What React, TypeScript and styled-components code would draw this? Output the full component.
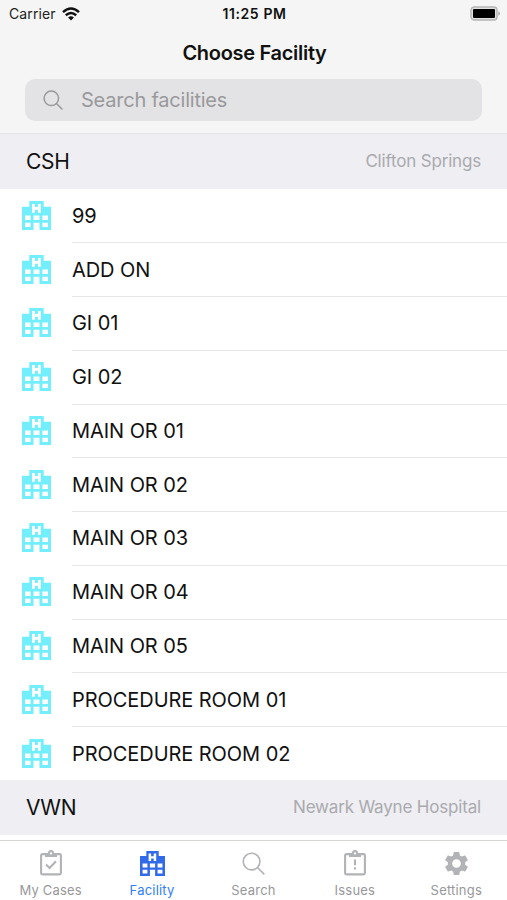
import React from "react";
import styled, { createGlobalStyle } from "styled-components";
import { MdSettings } from "react-icons/md";

const GlobalStyle = createGlobalStyle`
  * { box-sizing: border-box; }
  body { margin: 0; background: #fff; }
`;

const Screen = styled.div`
  width: 507px;
  height: 900px;
  display: flex;
  flex-direction: column;
  overflow: hidden;
  background: #fff;
  color: #111;
  font-family: Inter, "Liberation Sans", sans-serif;
  white-space: nowrap;
`;

const Header = styled.header`
  flex: none;
  height: 133.5px;
  background: #f5f5f5;
  border-bottom: 1px solid #e3e3e5;
`;

const StatusBar = styled.div`
  display: grid;
  grid-template-columns: 1fr auto 1fr;
  align-items: center;
  height: 27px;
  padding: 0 7px 0 9px;
  font-size: 14px;
`;

const Carrier = styled.div`
  display: flex;
  align-items: center;
  gap: 6px;
  color: #222;
  letter-spacing: 0.12px;
`;

const Clock = styled.div`
  font-weight: 600;
  letter-spacing: 0.6px;
`;

const BatterySlot = styled.div`
  display: flex;
  justify-content: flex-end;
`;

const Title = styled.h1`
  margin: 0;
  height: 52px;
  line-height: 52px;
  padding-left: 2px;
  text-align: center;
  font-size: 20px;
  font-weight: 600;
  letter-spacing: -0.3px;
`;

const SearchField = styled.div`
  display: flex;
  align-items: center;
  gap: 18px;
  height: 41.5px;
  margin: 0 25px;
  padding-left: 18px;
  border-radius: 10px;
  background: #e3e3e5;
  color: #99999c;
  font-size: 20px;
  letter-spacing: -0.22px;
`;

const List = styled.main`
  flex: 1;
  min-height: 0;
  overflow: hidden;
`;

const SectionHeader = styled.div`
  display: flex;
  align-items: center;
  justify-content: space-between;
  height: 55px;
  padding: 0 26px;
  background: #eeeef3;
`;

const SectionCode = styled.h2`
  margin: 0;
  font-size: 21px;
  font-weight: 400;
  letter-spacing: -0.25px;
`;

const SectionName = styled.span`
  color: #aaaaae;
  font-size: 17px;
  letter-spacing: -0.18px;
`;

const Row = styled.div`
  display: flex;
  height: 53.77px;
  padding-left: 22px;
  align-items: center;
`;

const RowLabel = styled.div<{ $first: boolean }>`
  display: flex;
  align-items: center;
  flex: 1;
  height: 100%;
  margin-left: 21px;
  border-top: 1px solid ${(p) => (p.$first ? "transparent" : "#e6e6e8")};
  font-size: 20px;
  letter-spacing: -0.06px;
`;

const TabBar = styled.nav`
  flex: none;
  display: grid;
  grid-template-columns: repeat(5, 1fr);
  height: 60px;
  border-top: 1px solid #d5d5d2;
  background: #fff;
`;

const Tab = styled.div<{ $active: boolean }>`
  display: flex;
  flex-direction: column;
  align-items: center;
  color: ${(p) => (p.$active ? "#2f80f5" : "#98989b")};
  font-size: 13px;
  letter-spacing: 0.2px;
`;

const TabIcon = styled.div<{ $active: boolean }>`
  display: flex;
  align-items: center;
  justify-content: center;
  height: 44px;
  margin-bottom: -3px;
  color: ${(p) => (p.$active ? "#326bea" : "#b1b3b6")};
`;

const Hospital = ({ size }: { size: number }) => (
  <svg width={size} height={size} viewBox="0 0 29 29" fill="currentColor" fillRule="evenodd">
    <path d="M7.3 0H21.7V5.7H29V29H17.5V21.7H11.5V29H0V5.7H7.3ZM10 3V11.7H12.9V8.7H15.9V11.7H18.8V3H15.9V6H12.9V3ZM3 14.6V19H8.6V14.6ZM11.5 14.6V19H17.5V14.6ZM20.4 14.6V19H26V14.6ZM3 21.8V26.1H8.6V21.8ZM20.4 21.8V26.1H26V21.8Z" />
  </svg>
);

const Magnifier = ({ size, stroke }: { size: number; stroke: number }) => (
  <svg width={size} height={size} viewBox="0 0 24 24" fill="none" stroke="currentColor" strokeWidth={stroke}>
    <circle cx="10" cy="10" r="8.7" />
    <path d="M16.2 16.2L23.3 23.3" />
  </svg>
);

const Clipboard = ({ mark }: { mark: string }) => (
  <svg width="22" height="26" viewBox="0 0 22 26" fill="none" stroke="currentColor" strokeWidth="2.1">
    <rect x="1.1" y="4.1" width="19.8" height="20.3" rx="1.4" />
    <path d="M5 3H8A3 3 0 0 1 14 3H17V7H5Z" fill="currentColor" stroke="none" />
    <circle cx="11" cy="3.4" r="1.1" fill="#fff" stroke="none" />
    <path d={mark} />
  </svg>
);

const Wifi = () => (
  <svg width="18" height="14" viewBox="0 0 18 14" fill="none" stroke="#111" strokeWidth="2.5">
    <path d="M1 5.1Q9 -2.2 17 5.1M3.8 8.3Q9 3.7 14.2 8.3" />
    <path d="M6.1 10.5Q9 8 11.9 10.5L9 13.5Z" fill="#111" stroke="none" />
  </svg>
);

const Battery = () => (
  <svg width="30" height="15" viewBox="0 0 30 15">
    <rect x="1" y="1" width="26" height="13" rx="3.2" fill="#e2e2e2" stroke="#b4b4b4" strokeWidth="1.4" />
    <rect x="3" y="3" width="22" height="9" rx="1" fill="#000" />
    <path d="M28.3 5.2Q30 6 30 7.5T28.3 9.8Z" fill="#aaa" />
  </svg>
);

const rooms = [
  "99",
  "ADD ON",
  "GI 01",
  "GI 02",
  "MAIN OR 01",
  "MAIN OR 02",
  "MAIN OR 03",
  "MAIN OR 04",
  "MAIN OR 05",
  "PROCEDURE ROOM 01",
  "PROCEDURE ROOM 02",
];

const tabs = [
  { label: "My Cases", icon: <Clipboard mark="M6 14.5L9.6 18L16 11.2" /> },
  { label: "Facility", icon: <Hospital size={25} />, active: true },
  { label: "Search", icon: <Magnifier size={23} stroke={1.7} /> },
  { label: "Issues", icon: <Clipboard mark="M11 9.5V15.2M11 17.3V19.5" /> },
  { label: "Settings", icon: <MdSettings size={29} /> },
];

const RoomIcon = styled.div`
  display: flex;
  color: #73eefd;
`;

const Section = ({ code, name }: { code: string; name: string }) => (
  <SectionHeader>
    <SectionCode>{code}</SectionCode>
    <SectionName>{name}</SectionName>
  </SectionHeader>
);

export default function App() {
  return (
    <>
      <GlobalStyle />
      <Screen>
        <Header>
          <StatusBar>
            <Carrier>
              Carrier
              <Wifi />
            </Carrier>
            <Clock>11:25 PM</Clock>
            <BatterySlot>
              <Battery />
            </BatterySlot>
          </StatusBar>
          <Title>Choose Facility</Title>
          <SearchField>
            <Magnifier size={20} stroke={1.8} />
            Search facilities
          </SearchField>
        </Header>
        <List>
          <Section code="CSH" name="Clifton Springs" />
          {rooms.map((room, i) => (
            <Row key={room}>
              <RoomIcon>
                <Hospital size={29} />
              </RoomIcon>
              <RowLabel $first={i === 0}>{room}</RowLabel>
            </Row>
          ))}
          <Section code="VWN" name="Newark Wayne Hospital" />
        </List>
        <TabBar>
          {tabs.map(({ label, icon, active = false }) => (
            <Tab key={label} $active={active}>
              <TabIcon $active={active}>{icon}</TabIcon>
              {label}
            </Tab>
          ))}
        </TabBar>
      </Screen>
    </>
  );
}
